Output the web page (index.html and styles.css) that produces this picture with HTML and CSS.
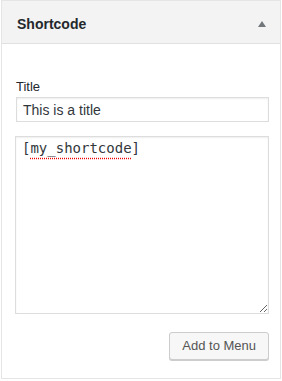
FILE: index.html
```html
<!DOCTYPE html>
<html lang="en">
<head>
    <meta charset="UTF-8">
    <meta name="viewport" content="width=device-width, initial-scale=1.0">
    <title>Shortcode</title>
    <link rel="stylesheet" href="styles.css">
</head>
<body>
    <div class="postbox">
        <div class="postbox-header">
            <h3 class="postbox-title">Shortcode</h3>
            <svg class="toggle-arrow" width="8" height="6" viewBox="0 0 8 6">
                <polygon points="4,0 8,6 0,6" fill="#72777c"/>
            </svg>
        </div>
        <div class="postbox-body">
            <label class="field-label" for="title">Title</label>
            <input class="field-input" id="title" type="text" value="This is a title">
            <div class="field-code"><span>[</span><span class="misspelled">my_shortcode</span><span>]</span></div>
            <div class="actions">
                <button class="button">Add to Menu</button>
            </div>
        </div>
    </div>
</body>
</html>
```

FILE: styles.css
```css
body {
    margin: 0;
    padding: 0;
    background-color: #fff;
    font-family: "Liberation Sans", Arial, sans-serif;
    color: #23282d;
}
.postbox {
    width: 280px;
    margin-left: 1px;
    box-sizing: border-box;
    border: 1px solid #e5e5e5;
    background-color: #fff;
}
.postbox-header {
    height: 42px;
    display: flex;
    align-items: center;
    justify-content: space-between;
    padding: 0 14px 0 15px;
    background-color: #f3f3f3;
    border-bottom: 1px solid #e1e1e1;
}
.postbox-title {
    margin: 0;
    font-size: 14px;
    font-weight: bold;
    line-height: 20px;
    padding-top: 3px;
}
.toggle-arrow {
    display: block;
    margin-top: 3px;
}
.postbox-body {
    padding: 34px 11px 18px 14px;
}
.field-label {
    display: block;
    font-size: 13px;
    line-height: 18px;
    margin-bottom: 1px;
    color: #23282d;
}
.field-input {
    display: block;
    width: 253px;
    height: 25px;
    box-sizing: border-box;
    margin: 0;
    padding: 0 6px;
    border: 1px solid #ddd;
    border-radius: 0;
    box-shadow: inset 0 1px 2px rgba(0, 0, 0, 0.07);
    font-family: "Liberation Sans", Arial, sans-serif;
    font-size: 14px;
    color: #32373c;
    outline: none;
}
.field-code {
    width: 254px;
    height: 178px;
    box-sizing: border-box;
    margin: 14px 0 0 -1px;
    padding: 2px 6px;
    border: 1px solid #ddd;
    box-shadow: inset 0 1px 2px rgba(0, 0, 0, 0.07);
    font-family: "DejaVu Sans Mono", "Liberation Mono", monospace;
    font-size: 14px;
    line-height: 18px;
    color: #32373c;
    overflow: auto;
    resize: both;
}
.misspelled {
    text-decoration: underline dotted #e00;
    text-underline-offset: 5px;
}
.actions {
    display: flex;
    justify-content: flex-end;
    margin-top: 18px;
}
.button {
    height: 28px;
    margin: 0;
    padding: 0 12px 1px;
    border: 1px solid #ccc;
    border-radius: 3px;
    background-color: #f7f7f7;
    box-shadow: 0 1px 0 #ccc;
    font-family: "Liberation Sans", Arial, sans-serif;
    font-size: 13px;
    color: #555;
    cursor: pointer;
}
```
